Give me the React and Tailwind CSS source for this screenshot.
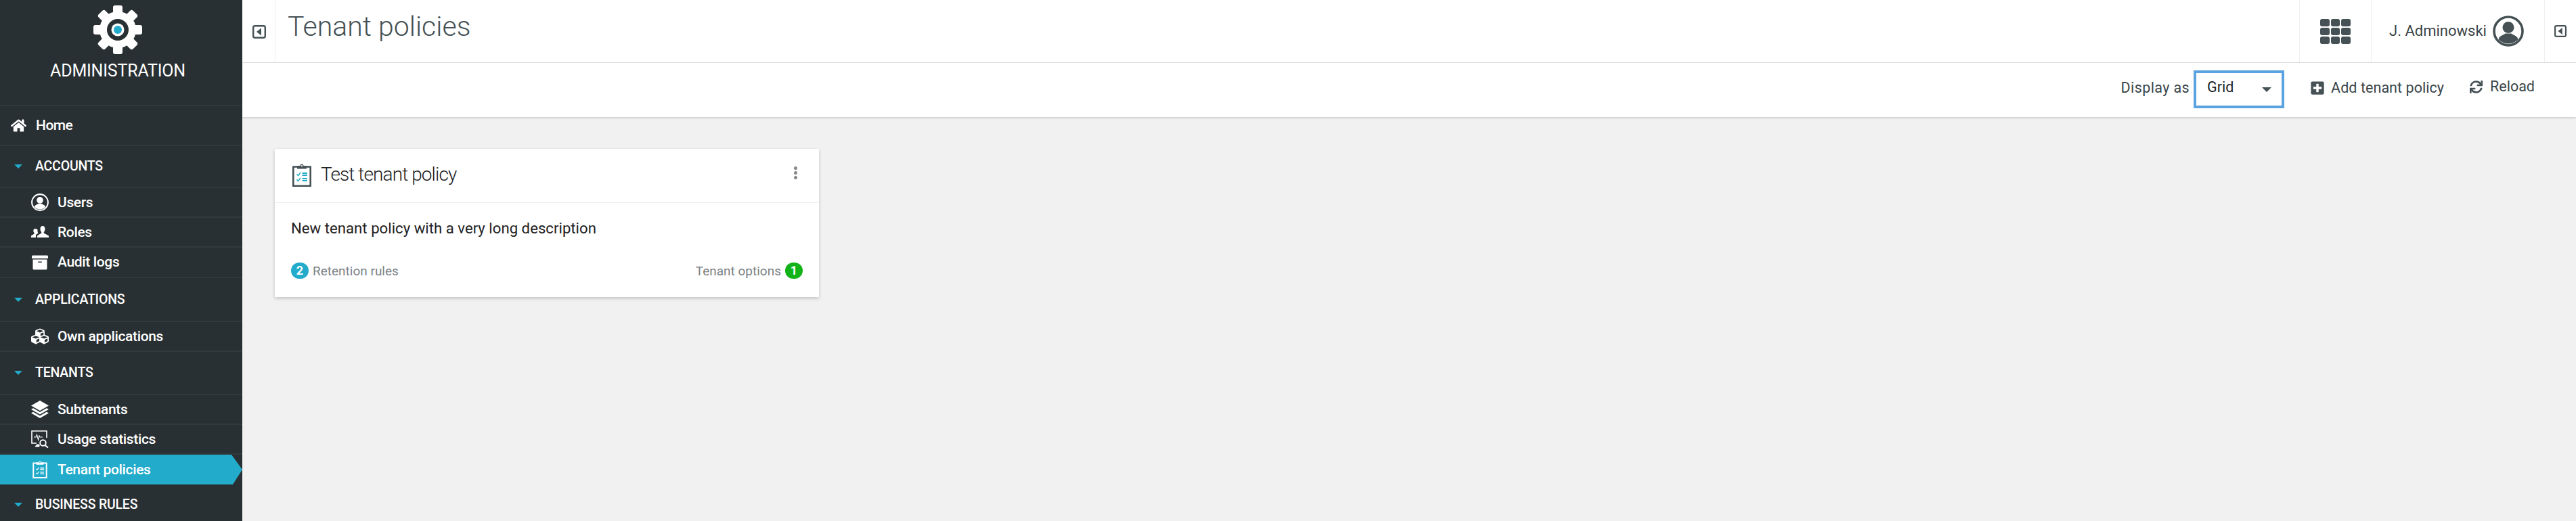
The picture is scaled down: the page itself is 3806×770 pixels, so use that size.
import { FaHome, FaArchive, FaCubes, FaPlusSquare, FaSync } from "react-icons/fa";

const FONT = "font-['Roboto','Liberation_Sans',sans-serif]";

function GearLogo() {
  const teeth = [0, 45, 90, 135, 180, 225, 270, 315];
  return (
    <svg viewBox="0 0 72 72" className="w-[72px] h-[72px]">
      {teeth.map((a) => (
        <rect key={a} x="29" y="0" width="14" height="16" rx="3" fill="#fff" transform={`rotate(${a} 36 36)`} />
      ))}
      <circle cx="36" cy="36" r="27" fill="#fff" />
      <circle cx="36" cy="36" r="16" fill="#293033" />
      <circle cx="36" cy="36" r="9.500" fill="#fff" />
      <circle cx="36" cy="36" r="6" fill="#22abca" />
    </svg>
  );
}

function CollapseIcon({ className }) {
  return (
    <svg viewBox="0 0 20 20" className={className}>
      <rect x="1.200" y="1.200" width="17.600" height="17.600" rx="2.500" fill="none" stroke="#455155" strokeWidth="2.400" />
      <path d="M13 4.500v11L6 10z" fill="#455155" />
    </svg>
  );
}

function UserCircle({ className }) {
  return (
    <svg viewBox="0 0 46 46" className={className}>
      <circle cx="23" cy="23" r="21" fill="none" stroke="currentColor" strokeWidth="3.600" />
      <circle cx="23" cy="17.500" r="8.500" fill="currentColor" />
      <path d="M8.500 35c1.500-6 8-6 10-8.500h9c2 2.500 8.500 2.500 10 8.500-3.500 4-8.800 6.500-14.500 6.500S12 39 8.500 35z" fill="currentColor" />
    </svg>
  );
}

function RolesIcon({ className }) {
  return (
    <svg viewBox="0 0 26 18" className={className} fill="currentColor">
      <path d="M17 0c2.500 0 3.500 2 3.500 4.500 0 2-.8 3.500-1.700 4.500v1.500l7.200 4V17H9v-2.500l6.200-4V9c-.9-1-1.700-2.500-1.700-4.500C13.500 2 14.500 0 17 0z" />
      <path d="M6.500 4c1.500 0 2.600.8 3.100 2-.3 1.600 0 3.500 1 4.600L7 13v4H0v-2.500l4.600-3V10.200C3.900 9.500 3.300 8.300 3.300 7 3.300 5.200 4.500 4 6.500 4z" />
    </svg>
  );
}

function LayersIcon({ className }) {
  return (
    <svg viewBox="0 0 26 26" className={className} fill="currentColor">
      <path d="M13 0l13 7.500L13 15 0 7.500z" />
      <path d="M3 11.200l10 5.800 10-5.800 3 1.800L13 20.500 0 13z" />
      <path d="M3 16.700l10 5.800 10-5.800 3 1.800L13 26 0 18.500z" />
    </svg>
  );
}

function UsageIcon({ className }) {
  return (
    <svg viewBox="0 0 26 26" className={className} fill="none" stroke="currentColor">
      <path d="M23 11V1H1v18h7" strokeWidth="1.600" />
      <path d="M4 10h3l1.500-3.500L10.500 14l1.500-6 1 2h4" strokeWidth="1.100" />
      <path d="M6 24l2.500-3H12v3z" fill="currentColor" strokeWidth="1" />
      <circle cx="17.500" cy="18.500" r="4.300" strokeWidth="1.900" />
      <path d="M20.500 22l4.500 3.500" strokeWidth="2.200" />
    </svg>
  );
}

function ClipboardIcon({ className, frame, marks, lines, hole }) {
  return (
    <svg viewBox="0 0 28 34" className={className} fill="none">
      <path d="M8 4.500H1.300v28.200h25.400V4.500H20" stroke={frame} strokeWidth="2.600" />
      <path d="M7 7.500V3h4.500a2.500 2.500 0 0 1 5 0H21v4.500z" fill={frame} />
      <circle cx="14" cy="3.200" r="1.100" fill={hole} />
      <path d="M6.500 15.500l2 2L12 13M6.500 23.500l2 2L12 21" stroke={marks} strokeWidth="1.500" />
      <path d="M14.500 14h7.500M14.500 17h7.500M14.500 22h7.500M14.500 25h7.500" stroke={lines} strokeWidth="1.800" />
    </svg>
  );
}

function GridIcon() {
  return (
    <div className="grid grid-cols-3 gap-[2px] w-[45px]">
      {Array.from({ length: 9 }).map((_, i) => (
        <div key={i} className="h-[11px] rounded-[3px] bg-[#455155]" />
      ))}
    </div>
  );
}

function SectionRow({ label, height }) {
  return (
    <div className={`flex items-center border-b-2 border-[#303a3d] text-white ${height}`}>
      <div className="ml-[21px] w-0 h-0 border-x-[6px] border-x-transparent border-t-[6px] border-t-[#22abca]" />
      <span className="ml-[19px] text-[19.500px] leading-none font-medium tracking-[-0.2px]">{label}</span>
    </div>
  );
}

function NavItem({ icon, label, height = "h-[44px]", active }) {
  return (
    <div
      className={`flex items-center text-white ${height} ${
        active
          ? "bg-[#22abca] w-[358px] [clip-path:polygon(0_0,342px_0,358px_50%,344px_100%,0_100%)]"
          : "border-b-2 border-[#303a3d]"
      }`}
    >
      <div className="ml-[46px] w-[26px] flex justify-center">{icon}</div>
      <span className="ml-[13px] text-[21px] leading-none font-medium tracking-[-0.35px]">{label}</span>
    </div>
  );
}

function Sidebar() {
  return (
    <aside className="w-[358px] h-[770px] shrink-0 bg-[#293033] overflow-hidden">
      <div className="h-[157px] border-b-2 border-[#303a3d] flex flex-col items-center pt-[8px] pr-[10px] text-white">
        <GearLogo />
        <div className="mt-[12px] text-[25px] leading-none tracking-[-0.2px]">ADMINISTRATION</div>
      </div>
      <div className="h-[59px] flex items-center border-b-2 border-[#303a3d] text-white">
        <FaHome className="ml-[16px] w-[23px] h-[23px]" />
        <span className="ml-[14px] text-[21px] leading-none font-medium tracking-[-0.5px]">Home</span>
      </div>
      <SectionRow label="ACCOUNTS" height="h-[62px]" />
      <NavItem icon={<UserCircle className="w-[26px] h-[26px]" />} label="Users" />
      <NavItem icon={<RolesIcon className="w-[26px] h-[18px]" />} label="Roles" />
      <NavItem icon={<FaArchive className="w-[24px] h-[24px]" />} label="Audit logs" height="h-[45px]" />
      <SectionRow label="APPLICATIONS" height="h-[65px]" />
      <NavItem icon={<FaCubes className="w-[26px] h-[26px]" />} label="Own applications" />
      <SectionRow label="TENANTS" height="h-[64px]" />
      <NavItem icon={<LayersIcon className="w-[26px] h-[26px]" />} label="Subtenants" />
      <NavItem icon={<UsageIcon className="w-[26px] h-[26px]" />} label="Usage statistics" />
      <NavItem
        active
        icon={<ClipboardIcon className="w-[22px] h-[26px]" frame="#fff" marks="#fff" lines="#fff" hole="#22abca" />}
        label="Tenant policies"
      />
      <SectionRow label="BUSINESS RULES" height="h-[62px]" />
    </aside>
  );
}

function Header() {
  return (
    <header className="h-[93px] bg-white flex items-stretch border-b border-[#e4e4e4]">
      <div className="w-[50px] flex items-center justify-center border-r border-[#f0f0f0] rounded-br-md">
        <CollapseIcon className="w-[20px] h-[20px] mt-[1px]" />
      </div>
      <h1 className="ml-[17px] mt-[16px] text-[41px] leading-[46px] font-light text-[#455155]">Tenant policies</h1>
      <div className="ml-auto flex items-stretch">
        <div className="w-[107px] flex items-center justify-center border-x border-[#f0f0f0]">
          <GridIcon />
        </div>
        <div className="w-[256px] flex items-center pl-[26px] border-r border-[#f0f0f0]">
          <span className="text-[22px] leading-none text-[#3a4548]">J. Adminowski</span>
          <UserCircle className="ml-[9px] w-[46px] h-[46px] text-[#455155]" />
        </div>
        <div className="w-[46px] flex items-center justify-center">
          <CollapseIcon className="w-[18px] h-[20px]" />
        </div>
      </div>
    </header>
  );
}

function Toolbar() {
  return (
    <div className="h-[80px] bg-white flex items-center justify-end pb-[6px] pr-[61px] shadow-[0_1px_3px_rgba(0,0,0,0.2)] relative text-[#3a4548] text-[21.500px] leading-none">
      <span className="tracking-[0.4px]">Display as</span>
      <div className="self-start mt-[11px] ml-[6px] w-[134px] h-[56px] border-[4px] border-[#5aa3e0] flex items-center justify-between pl-[16px] pr-[15px]">
        <span className="text-[#222] -mt-[6px]">Grid</span>
        <div className="w-0 h-0 border-x-[7px] border-x-transparent border-t-[7px] border-t-[#455155]" />
      </div>
      <FaPlusSquare className="ml-[39px] w-[20px] h-[22px] text-[#455155]" />
      <span className="ml-[10px] tracking-[0.05px]">Add tenant policy</span>
      <FaSync className="ml-[38px] w-[19px] h-[19px] text-[#455155] -mt-[3px]" />
      <span className="ml-[11px] -mt-[4px]">Reload</span>
    </div>
  );
}

function Badge({ value, color }) {
  return (
    <span className={`w-[26px] h-[24px] rounded-full flex items-center justify-center text-white text-[18px] font-bold leading-none ${color}`}>
      {value}
    </span>
  );
}

function PolicyCard() {
  return (
    <div className="w-[804px] h-[219px] bg-white shadow-[0_2px_5px_rgba(0,0,0,0.2)]">
      <div className="h-[80px] flex items-center border-b border-[#ededed] pl-[26px] pr-[32px]">
        <ClipboardIcon className="w-[28px] h-[34px] -mt-[2px]" frame="#455155" marks="#22abca" lines="#22abca" hole="#fff" />
        <span className="ml-[14px] text-[28px] leading-none font-light tracking-[-0.9px] text-[#222] -mt-[4px]">Test tenant policy</span>
        <div className="ml-auto flex flex-col gap-[2px] -mt-[8px]">
          <span className="w-[5px] h-[5px] rounded-full bg-[#888]" />
          <span className="w-[5px] h-[5px] rounded-full bg-[#888]" />
          <span className="w-[5px] h-[5px] rounded-full bg-[#888]" />
        </div>
      </div>
      <div className="px-[24px]">
        <p className="mt-[25px] text-[22.200px] leading-[24px] text-[#222]">New tenant policy with a very long description</p>
        <div className="mt-[39px] flex items-center justify-between text-[19px] leading-none text-[#7b8285]">
          <div className="flex items-center gap-[6px]">
            <Badge value="2" color="bg-[#22abca]" />
            <span>Retention rules</span>
          </div>
          <div className="flex items-center gap-[6px]">
            <span>Tenant options</span>
            <Badge value="1" color="bg-[#12b318]" />
          </div>
        </div>
      </div>
    </div>
  );
}

export default function App() {
  return (
    <div className={`flex w-[3806px] h-[770px] overflow-hidden bg-[#f1f1f1] ${FONT}`}>
      <Sidebar />
      <main className="flex-1 flex flex-col min-w-0">
        <Header />
        <Toolbar />
        <div className="pl-[48px] pt-[47px]">
          <PolicyCard />
        </div>
      </main>
    </div>
  );
}
